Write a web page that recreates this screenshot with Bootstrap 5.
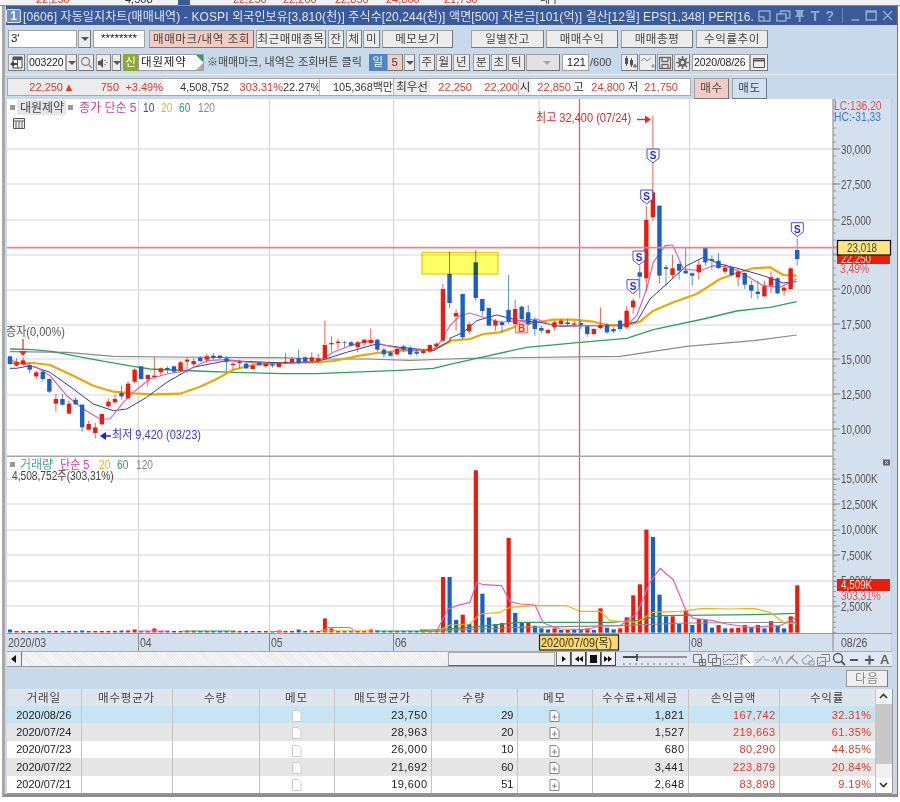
<!DOCTYPE html>
<html lang="ko">
<head>
<meta charset="UTF-8">
<title>자동일지차트</title>
<link rel="stylesheet" href="https://cdn.jsdelivr.net/npm/bootstrap@5.3.0/dist/css/bootstrap.min.css">
<style>
body { margin: 0; background: #fff; overflow: hidden; width: 900px; height: 802px; font: 11.5px "Liberation Sans", "Noto Sans CJK KR", sans-serif; color: #333; }
svg text { font-family: "Liberation Sans", "Noto Sans CJK KR", sans-serif; }
.top-cut { display: block; height: 6px; }
.hts-win { margin-left: 2px; width: 896px; height: 791px; background: #c9d9ec; border-left: 3px solid #a8a8a8; border-bottom: 3px solid #8f8f8f; border-right: 1px solid #777; }
.title-row { height: 19px; background: #3a5a99; color: #dfe6f5; font-size: 12px; letter-spacing: .12px; margin-left: 1px; flex: none; }
.title-num { width: 15px; height: 14px; border: 1px solid #dfe6f5; border-radius: 2px; background: #6f8fc8; text-align: center; line-height: 12px; font-weight: 700; color: #fff; margin-right: 2px; letter-spacing: 0; flex: none; }
.title-txt { width: 732px; white-space: nowrap; overflow: hidden; flex: none; }
.tools { height: 50px; padding: 5px 0 0 3px; border-bottom: 1px solid #e8eef6; flex: none; }
.tool-line { height: 18px; }
.tool-line + .tool-line { margin-top: 6px; height: 17px; }
.tbtn { height: 100%; padding: 0; background: #ececec; border: 1px solid #a0a0a0; border-right-color: #777; border-bottom-color: #777; border-radius: 0; font-size: 11.5px; line-height: 15px; color: #444; white-space: nowrap; letter-spacing: .6px; flex: none; }
.tbtn.hot { background: #f4cbc2; }
.tbtn.cool { background: #cfe0f2; }
.tbtn.on { background: #4d86c8; color: #fff; border-color: #4d86c8; }
.tbtn.dim { background: #e2e2e2; }
.fld { height: 100%; min-height: 0; padding: 0 2px; border: 1px solid #a0a0a0; border-radius: 0; background: #fff; font-size: 11.5px; line-height: 15px; color: #222; flex: none; white-space: nowrap; overflow: hidden; }
.fld.tight { padding: 0 1px; font-size: 10.5px; letter-spacing: -.1px; }
.fld.corner { letter-spacing: .8px; }
.note { font-size: 11px; line-height: 17px; color: #444; white-space: nowrap; flex: none; }
.sin { height: 100%; background: #8fa832; color: #fff; text-align: center; line-height: 16px; flex: none; }
.tri { display: block; width: 0; height: 0; margin: 0 auto; border-left: 4px solid transparent; border-right: 4px solid transparent; border-top: 4px solid #555; }
.tri.off { border-top-color: #aaa; }
.corner { position: relative; }
.corner::before { content: ""; position: absolute; top: 0; right: 0; border-top: 7px solid #2f9e55; border-left: 7px solid transparent; }
.corner::after { content: ""; position: absolute; bottom: 0; right: 0; border-bottom: 7px solid #aaa; border-left: 7px solid transparent; }
.quote-line { height: 24px; padding: 3px 0 0 2px; flex: none; }
.quote-box { height: 18px; width: 684px; border: 1px solid #a8a8a8; background: #fff; flex: none; }
.qc { height: 100%; line-height: 16px; font-size: 11px; text-align: right; white-space: nowrap; flex: none; color: #333; }
.qc.up { color: #e8352a; }
.qc.grey { background: #ececec; }
.qc.lab { text-align: center; font-size: 11.5px; }
.qc.bar { border-left: 1px solid #bbb; }
.chart-svg { display: block; margin-left: 2px; width: 885px; height: 552px; flex: none; }
.scroller { height: 16px; margin-left: 2px; width: 885px; background: #dfe7f2; border-top: 1px solid #aaa; border-bottom: 1px solid #999; flex: none; }
.hatch { width: 426px; background: repeating-linear-gradient(45deg, #f6f6f6 0 1px, #ebebeb 1px 2px); }
.thumb { width: 107px; background: #efefef; border: 1px solid #aaa; border-bottom-color: #666; }
.mbtn { width: 15px; height: 100%; background: #f2f2f2; border-left: 1px solid #777; border-right: 1px solid #444; border-bottom: 1px solid #444; flex: none; }
.arrowbtn { width: 15px; background: #efefef; border-right: 1px solid #777; }
.next-row { height: 22px; margin-left: 2px; width: 885px; padding: 3px 4px 2px 0; flex: none; }
.next-btn { width: 42px; height: 17px; font-size: 12px; line-height: 14px; color: #888; background: #eee; border: 1px solid #999; border-right-color: #777; padding: 0; border-radius: 0; letter-spacing: 1px; }
.grid-wrap { margin-left: 2px; width: 885px; height: 105px; border-bottom: 1px solid #999; flex: none; }
.trade-grid { margin: 0; width: 868px; table-layout: fixed; font-size: 11px; --bs-table-border-color: #c4c4c4; flex: none; }
.trade-grid th, .trade-grid td { height: 17.3px; padding: 0 3px; line-height: 14px; font-weight: 400; white-space: nowrap; vertical-align: middle; border-width: 0 1px 0 0; color: #222; }
.trade-grid th { background: #dde5ef; color: #444; text-align: center; font-size: 11.5px; letter-spacing: .8px; height: 17px; }
.trade-grid td.gain { color: #e8352a; letter-spacing: .4px; }
.trade-grid td.sp { letter-spacing: .45px; }
.trade-grid tr.pick td { background: #c6e5f0; }
.trade-grid tr.alt td { background: #e5e5e5; }
.trade-grid tr.plain td { background: #fff; }
.grid-scroll { width: 17px; background: #f0f0f0; border-right: 1px solid #999; flex: none; }
.sc-arrow { height: 15px; background: #eef1f5; color: #444; text-align: center; }
.sc-thumb { height: 61px; background: #c8c8c8; }
.sc-rest { height: 14px; }
.sc-down { height: 15px; background: #fff; text-align: center; }
.wd9 { width: 9px; } .wd11 { width: 11px; } .wd13 { width: 13px; } .wd15 { width: 15px; } .wd16 { width: 16px; } .wd17 { width: 17px; } .wd18 { width: 18px; }
.wd22 { width: 22px; } .wd27 { width: 27px; } .wd34 { width: 34px; } .wd35 { width: 35px; } .wd39 { width: 39px; } .wd52 { width: 52px; } .wd58 { width: 58px; } .wd66 { width: 66px; } .wd69 { width: 69px; } .wd70 { width: 70px; } .wd71 { width: 71px; } .wd72 { width: 72px; } .wd73 { width: 73px; } .wd105 { width: 105px; } .wd153 { width: 153px; }
.sp1 { margin-left: 1px; } .sp2 { margin-left: 2px; } .sp3 { margin-left: 3px; } .sp4 { margin-left: 4px; } .sp9 { margin-left: 9px; } .sp18 { margin-left: 18px; }
.cut-a { width: 55px; } .cut-b { width: 12px; } .cut-c { width: 44px; } .cut-d { width: 44px; } .cut-e { width: 66px; } .cut-f { width: 54px; } .cut-g { width: 36px; } .cut-h { width: 74px; } .cut-i { width: 37px; } .cut-j { width: 42px; } .cut-k { width: 46px; } .cut-l { width: 13px; } .cut-m { width: 40px; } .cut-n { width: 15px; } .cut-o { width: 39px; } .cut-p { width: 16px; } .cut-q { width: 37px; }
.mark-blend { mix-blend-mode: multiply; }
.c74 { width: 74px; } .c91 { width: 91px; } .c87 { width: 87px; } .c75 { width: 75px; } .c97 { width: 97px; } .c86 { width: 86px; } .c96 { width: 96px; }
</style>
</head>
<body>

<!-- sliver of the window behind -->
<svg class="top-cut" viewBox="0 0 900 6" width="900" height="6">
    <rect width="900" height="6" fill="#f2f2f2"/>
    <g font-size="11" fill="#e8352a">
        <text x="36" y="3">22,250</text><text x="233" y="3">22,250</text><text x="283" y="3">22,200</text><text x="335" y="3">22,850</text><text x="386" y="3">24,800</text><text x="444" y="3">21,750</text>
    </g>
    <g font-size="11" fill="#333"><text x="125" y="3">4,508</text><text x="540" y="3">매수</text></g>
    <rect x="178" y="0" width="12" height="5" fill="#3a5a99"/>
    <rect x="0" y="5" width="900" height="1" fill="#888"/>
</svg>

<div class="hts-win d-flex flex-column">

    <!-- title bar -->
    <div class="title-row d-flex align-items-center">
        <div class="title-num">1</div>
        <div class="title-txt">[0606] 자동일지차트(매매내역) - KOSPI 외국인보유[3,810(천)] 주식수[20,244(천)] 액면[500] 자본금[101(억)] 결산[12월] EPS[1,348] PER[16.</div>
        <svg viewBox="755 6 143 19" width="143" height="19" fill="none" stroke="#93a8d0" stroke-width="1.5">
            <path d="M759 11h11v10h-11zM759 17h5v4"/>
            <path d="M777 14h9v7h-9zM781 14v-3h9v7h-4"/>
            <path d="M795 10h10l-2 2v3l2 2h-4v5h-2v-5h-4l2-2v-3z" fill="#93a8d0" stroke="none"/>
            <text x="811" y="21" font-family="Liberation Serif" font-size="15" font-weight="700" fill="#93a8d0" stroke="none">T</text>
            <text x="826" y="21" font-size="14" font-weight="700" fill="#93a8d0" stroke="none">?</text>
            <path d="M843 8v15" stroke="#6f86b5" stroke-width="1"/>
            <path d="M852 20h8M867 11h10v9h-10zM867 12h10M884 11l9 9M893 11l-9 9"/>
        </svg>
    </div>

    <!-- toolbar, two rows -->
    <div class="tools">
        <div class="tool-line d-flex">
            <div class="form-control fld wd69">3'</div>
            <button class="btn tbtn wd13 sp1"><span class="tri"></span></button>
            <div class="form-control fld wd52 sp2 text-center">********</div>
            <button class="btn tbtn hot wd105 sp4">매매마크/내역 조회</button>
            <button class="btn tbtn wd70 sp2">최근매매종목</button>
            <button class="btn tbtn wd16 sp2">잔</button>
            <button class="btn tbtn wd16 sp2">체</button>
            <button class="btn tbtn wd17 sp1">미</button>
            <button class="btn tbtn wd71 sp2">메모보기</button>
            <button class="btn tbtn wd73 sp18">일별잔고</button>
            <button class="btn tbtn wd72 sp2">매매수익</button>
            <button class="btn tbtn wd72 sp3">매매총평</button>
            <button class="btn tbtn wd72 sp3">수익률추이</button>
        </div>
        <div class="tool-line d-flex">
            <button class="btn tbtn wd17"><svg width="15" height="15" viewBox="0 0 15 15"><path d="M4 2h9v11H4z" fill="#fff" stroke="#444"/><path d="M4 2h9v3H4zM8 5h1v8H8z" fill="#555"/><path d="M1 9l4-3v2h3v2H5v2z" fill="#444"/></svg></button>
            <div class="form-control fld tight wd39 sp2">003220</div>
            <button class="btn tbtn wd11"><span class="tri"></span></button>
            <button class="btn tbtn wd16 sp1"><svg width="13" height="13" viewBox="0 0 13 13" fill="none" stroke="#888" stroke-width="1.4"><circle cx="5.5" cy="5.5" r="4"/><path d="M8.5 8.5l3.5 3.5"/></svg></button>
            <button class="btn tbtn wd15 sp2"><svg width="13" height="13" viewBox="0 0 13 13"><path d="M1 5h2l3-3v10l-3-3H1z" fill="#555"/><path d="M8 4v1M8 8v1M10 6v1" stroke="#555"/></svg></button>
            <button class="btn tbtn wd9 sp1"><span class="tri"></span></button>
            <div class="sin wd15 sp2">신</div>
            <div class="form-control fld wd66 corner">대원제약</div>
            <div class="note wd153 sp3">※매매마크, 내역은 조회버튼 클릭</div>
            <button class="btn tbtn on wd18 sp9">일</button>
            <button class="btn tbtn hot wd16">5</button>
            <button class="btn tbtn wd11 sp1"><span class="tri"></span></button>
            <button class="btn tbtn wd16 sp4">주</button>
            <button class="btn tbtn wd16 sp1">월</button>
            <button class="btn tbtn wd17 sp1">년</button>
            <button class="btn tbtn wd17 sp3">분</button>
            <button class="btn tbtn wd16 sp1">초</button>
            <button class="btn tbtn wd17 sp1">틱</button>
            <button class="btn tbtn dim wd34 sp1 text-end pe-1"><span class="tri off ms-auto me-1"></span></button>
            <div class="form-control fld wd27 sp2 text-end">121</div>
            <div class="note wd22 sp1">/600</div>
            <button class="btn tbtn wd17 sp9"><svg width="15" height="15" viewBox="0 0 15 15"><path d="M3 3h3v6H3zM8 5h3v5H8z" fill="#555"/><path d="M4.5 1v10M9.5 3v9M11 11h4M13 9v4" stroke="#555"/></svg></button>
            <button class="btn tbtn wd17 sp1"><svg width="15" height="15" viewBox="0 0 15 15" fill="none" stroke="#888"><path d="M1 6l3-3 3 3 4-3M11 11h4M13 9v4"/></svg></button>
            <button class="btn tbtn wd16 sp1"><svg width="14" height="14" viewBox="0 0 14 14" fill="none" stroke="#666" stroke-width="1.3"><path d="M1.5 1.5h11v11h-11zM4 1.5v4h6v-4M4 12.5v-4h6v4"/></svg></button>
            <button class="btn tbtn wd16 sp1"><svg width="13" height="13" viewBox="0 0 13 13" fill="none" stroke="#666"><circle cx="6.5" cy="6.5" r="3" stroke-width="2.4"/><path d="M6.5 0v2.5M6.5 10.5V13M0 6.5h2.5M10.5 6.5H13M2 2l1.8 1.8M9.2 9.2 11 11M11 2 9.2 3.8M3.8 9.2 2 11" stroke-width="1.6"/></svg></button>
            <div class="form-control fld tight wd58 sp2">2020/08/26</div>
            <button class="btn tbtn wd18"><svg width="14" height="12" viewBox="0 0 14 12" fill="none" stroke="#555"><path d="M1.5 1.5h11v9h-11z"/><path d="M1.5 3.5h11" stroke-width="2"/></svg></button>
        </div>
    </div>

    <!-- quote strip -->
    <div class="quote-line d-flex">
        <div class="quote-box d-flex">
            <div class="qc up grey cut-a">22,250</div>
            <div class="qc up grey cut-b text-center">▲</div>
            <div class="qc up grey cut-c">750</div>
            <div class="qc up grey cut-d">+3.49%</div>
            <div class="qc cut-e">4,508,752</div>
            <div class="qc up cut-f">303.31%</div>
            <div class="qc cut-g">22.27%</div>
            <div class="qc bar cut-h">105,368백만</div>
            <div class="qc lab grey bar cut-i">최우선</div>
            <div class="qc up cut-j">22,250</div>
            <div class="qc up cut-k">22,200</div>
            <div class="qc lab grey bar cut-l">시</div>
            <div class="qc up cut-m">22,850</div>
            <div class="qc lab cut-n">고</div>
            <div class="qc up cut-o">24,800</div>
            <div class="qc lab cut-p">저</div>
            <div class="qc up cut-q">21,750</div>
        </div>
        <button class="btn tbtn hot wd35 sp3">매수</button>
        <button class="btn tbtn cool wd35 sp3">매도</button>
    </div>

    <!-- price and volume chart -->
    <svg class="chart-svg" id="chart" viewBox="7 100 885 552"></svg>

    <!-- scroller -->
    <div class="scroller d-flex">
        <div class="arrowbtn text-center"><svg width="8" height="14" viewBox="0 0 8 14"><path d="M6 3v8L1 7z" fill="#111"/></svg></div>
        <div class="hatch"></div>
        <div class="thumb"></div>
        <div class="mbtn sp1"><svg width="13" height="14" viewBox="0 0 13 14"><path d="M5 4v6l4-3z" fill="#111"/></svg></div>
        <div class="mbtn"><svg width="13" height="14" viewBox="0 0 13 14"><path d="M7 4v6L3 7zM11 4v6L7 7z" fill="#111"/></svg></div>
        <div class="mbtn"><svg width="13" height="14" viewBox="0 0 13 14"><path d="M3 3h7v8H3z" fill="#111"/></svg></div>
        <div class="mbtn"><svg width="13" height="14" viewBox="0 0 13 14"><path d="M2 4v6l4-3zM6 4v6l4-3z" fill="#111"/></svg></div>
        <svg viewBox="616 652 276 14" width="276" height="14">
            <rect x="739" y="652" width="14" height="14" fill="#fff"/>
            <g stroke="#777" fill="none">
                <path d="M623 657h64" stroke-width="1.5"/><path d="M637 654v7" stroke="#333" stroke-width="1.5"/><path d="M623 657h13" stroke="#333" stroke-width="1.5"/>
                <path d="M624 663v2M630 663v2M636 663v2M642 663v2M648 663v2M654 663v2M660 663v2M666 663v2M672 663v2M678 663v2M684 663v2"/>
                <path d="M693.5 654.5h8v8h-8zM699.5 659.5h6v6h-6zM702.5 659.5v6M699.5 662.5h6"/>
                <path d="M708.5 654.5h8v8h-8zM712.5 658.5h8v7h-8z"/>
                <path d="M723.5 654.5h14v10h-14z" stroke-dasharray="2 1"/><path d="M725 662l4-3 3 2 4-4"/>
                <path d="M741 654v11M742 655l8 8M742 655h5M742 655v5" stroke="#667"/>
                <path d="M755 660h5l3-4 2 4h4M756 663l6-4" stroke="#aaa"/>
                <path d="M772 662l3-5 2 7 3-8 3 8" stroke="#999"/>
                <path d="M786 664l5-7 7 7M789 660l5-5" stroke="#999" stroke-width="1.3"/>
                <path d="M802 660l6-5 5 4-4 5h-5zM809 661h5v4h-5z" stroke="#999"/>
                <path d="M817.5 657.5h8v8h-8zM821.5 654.5h8v7h-3" stroke="#888"/><path d="M819 664l3-3 3 1" stroke="#888"/>
                <circle cx="838" cy="658" r="4.5" stroke="#555" stroke-width="1.3"/><path d="M841 661l4 4" stroke="#555" stroke-width="1.8"/>
                <path d="M850 660h8M865 660h9M869.5 655.5v9" stroke="#555" stroke-width="2"/>
            </g>
            <text x="880" y="664" font-size="13" font-weight="700" fill="#666">A</text>
        </svg>
    </div>

    <div class="next-row d-flex justify-content-end">
        <button class="btn next-btn">다음</button>
    </div>

    <!-- trade list -->
    <div class="grid-wrap d-flex">
        <table class="table trade-grid">
            <colgroup><col class="c74"><col class="c91"><col class="c87"><col class="c75"><col class="c97"><col class="c86"><col class="c75"><col class="c96"><col class="c91"><col class="c96"></colgroup>
            <thead>
                <tr><th>거래일</th><th>매수평균가</th><th>수량</th><th>메모</th><th>매도평균가</th><th>수량</th><th>메모</th><th>수수료+제세금</th><th>손익금액</th><th>수익률</th></tr>
            </thead>
            <tbody id="tradeRows"></tbody>
        </table>
        <div class="grid-scroll d-flex flex-column">
            <div class="sc-arrow"><svg width="11" height="12" viewBox="0 0 11 12" fill="none" stroke="#333" stroke-width="1.6"><path d="M2 8l3.5-3.500L9 8"/></svg></div>
            <div class="sc-thumb"></div>
            <div class="sc-rest"></div>
            <div class="sc-down"><svg width="11" height="12" viewBox="0 0 11 12" fill="none" stroke="#333" stroke-width="1.6"><path d="M2 4l3.5 3.500L9 4"/></svg></div>
        </div>
    </div>
</div>

<script>
    const RED = "#ea1c0c", BLUE = "#1a5fc8";

    // candles: colour, body top, body bottom, wick top, wick bottom
    // first block read in zoom coords of the left half, second block of the right half
    const leftCandles = `b 352 375 350 378,r 370 380 358 382,r 364 376 355 380,b 378 392 372 402,r 400 412 395 420,b 398 420 395 428,b 420 458 418 462,r 480 494 465 518,b 480 497 465 500,r 494 524 485 524,b 482 496 475 498,b 497 565 495 578,r 555 572 545 574,r 565 582 552 598,r 525 556 525 558,r 488 502 480 504,r 480 490 468 494,b 462 472 440 482,r 434 478 426 480,r 392 428 388 434,b 382 420 382 422,r 408 420 405 442,r 410 414 355 415,r 388 400 385 410,b 387 392 382 402,b 382 398 380 402,r 370 394 366 398,r 362 368 356 402,r 366 376 358 378,b 356 366 352 370,r 352 362 345 372,b 350 357 342 362,b 350 357 348 360,b 358 368 352 398,r 374 378 370 392,r 368 372 362 388,b 374 388 366 390,r 380 390 374 392,b 370 378 368 382,r 374 382 372 385,b 376 380 370 386,r 372 384 370 386,r 368 372 342 376,r 360 370 354 372,b 358 372 332 376,b 355 368 352 372,r 355 366 340 370,r 358 366 345 372,r 318 358 245 362,r 312 316 292 340,r 308 312 300 330,b 310 312 306 325,b 310 320 306 322,r 310 324 306 340,r 302 312 300 322,r 303 312 268 318,b 302 332 300 338,b 332 346 325 356,b 340 350 336 354,r 330 346 325 350,b 322 332 318 340,b 326 346 320 350,b 338 344 332 350,r 335 342 330 346,r 318 338 316 342,r 314 322 310 326`;
    const rightCandles = `r 570 725 555 730,b 525 612 458 628,r 642 652 630 695,b 585 715 585 722,r 676 697 668 705,b 490 597 453 605,b 600 636 600 650,b 627 680 627 682,r 665 680 660 695,b 670 678 665 700,b 633 668 528 675,r 630 675 602 680,b 623 660 620 665,b 640 675 618 680,b 663 690 655 710,b 687 695 680 703,r 693 702 690 705,r 670 685 665 695,r 665 675 660 678,b 670 675 660 682,r 673 677 665 685,b 672 678 665 690,b 682 705 680 713,r 690 705 688 708,r 678 687 625 690,b 677 700 672 705,b 690 697 685 702,b 665 690 662 695,r 635 685 622 690,r 605 625 598 645,b 520 533 500 598,r 363 538 320 575,r 280 355 50 365,b 320 530 320 552,b 505 510 498 562,r 508 528 468 540,b 495 515 490 542,b 515 523 447 525,b 523 530 520 560,r 497 520 482 542,b 447 490 445 500,b 480 485 470 512,b 485 507 462 510,r 507 518 495 525,b 505 528 503 532,r 518 535 510 562,b 522 557 520 570,b 558 575 545 598,b 578 585 545 600,r 562 592 545 595,r 535 560 517 582,b 538 583 535 585,r 566 575 560 590,r 508 570 505 572,b 453 480 420 500`;

    const candles = [
        ...leftCandles.split(",").map(s => parseCandle(s, 240)),
        ...rightCandles.split(",").map(s => parseCandle(s, 100))
    ];

    function parseCandle(s, top) {
        let p = s.split(" ");
        return { c: p[0] === "r" ? RED : BLUE, y: [1, 2, 3, 4].map(n => top + p[n] / 3) };
    }

    const candleX = i => 10 + 6.56 * i;

    // volume bars: tops in zoom coords for the right part, small heights on the left
    const volSmall = { 0: 3, 11: 2, 17: 2, 18: 2, 19: 3, 22: 4, 41: 2, 44: 3, 46: 2, 48: 14, 49: 4, 55: 3, 56: 2 };
    const volRight = `r 384,b 384,b 513,r 497,b 525,r 64,b 434,b 505,b 525,r 522,r 267,b 492,b 520,r 522,b 530,b 538,b 541,r 538,b 543,r 543,b 543,b 543,r 538,b 543,r 478,b 536,b 541,r 538,r 505,r 439,r 406,r 242,b 264,b 437,b 502,r 502,b 525,r 485,b 528,r 510,b 512,b 536,r 528,b 538,r 538,r 536,r 528,b 534,r 528,b 538,r 516,b 531,b 538,r 502,r 409`.split(",");

    // moving averages, zoom coords: [left-half points, right-half points]
    const lines = [
        { col: "#8a8a8a", w: 1.2, a: [30,338,200,340,340,352,500,354,830,356,980,360,1100,360,1230,364,1350,360], b: [140,778,600,772,800,742,1000,725,1130,708] },
        { col: "#2aa35a", w: 1.3, a: [30,330,100,332,160,338,220,350,300,365,400,382,450,390,590,396,700,400,850,404,950,404,1100,398,1200,394,1300,388,1350,376], b: [170,778,320,745,480,730,620,718,700,692,850,660,950,636,1050,625,1130,608] },
        { col: "#f0a800", w: 2.2, a: [30,372,100,372,150,378,220,410,280,440,340,458,400,463,460,466,540,464,600,443,650,420,700,392,760,378,850,372,940,370,1000,366,1080,350,1130,342,1200,335,1300,332,1350,308], b: [90,725,150,720,190,705,240,700,290,682,340,672,400,662,460,662,520,668,560,678,620,678,660,668,700,635,760,610,830,585,900,540,950,522,1000,508,1050,505,1090,528,1130,530] },
        { col: "#2b3fa8", w: 1, a: [30,388,50,388,90,380,150,400,220,450,280,495,340,515,380,510,440,475,500,430,580,385,680,365,760,368,850,372,950,368,1040,340,1130,315,1200,325,1300,335,1350,305], b: [90,718,130,700,170,665,230,648,300,665,360,670,420,682,500,680,600,680,650,668,690,600,740,555,800,500,850,475,900,495,960,510,1030,530,1090,552,1130,548] },
        { col: "#e35cc4", w: 1.2, a: [30,362,60,372,110,385,150,410,200,470,250,510,300,540,330,540,370,490,400,460,450,420,500,405,560,395,620,365,680,362,750,370,840,375,960,365,1000,340,1050,320,1110,305,1160,320,1230,335,1300,330,1320,310,1350,260], b: [90,680,120,650,150,642,190,655,240,670,300,665,350,660,400,680,460,680,540,680,620,680,650,650,680,570,700,490,735,440,758,438,790,510,840,515,880,500,930,505,980,530,1030,560,1080,565,1130,540] }
    ];
    const volLines = [
        { col: "#8a8a8a", w: 1.2, p: [0,548,300,535,600,530,800,522,1130,520] },
        { col: "#2aa35a", w: 1.3, p: [0,545,150,535,300,520,570,520,650,515,720,500,1000,497,1130,493] },
        { col: "#f5b400", w: 1.2, p: [0,541,60,543,90,528,150,525,180,495,240,490,270,475,340,470,440,470,480,487,540,487,570,515,650,520,700,490,780,487,850,478,930,480,1000,478,1050,490,1090,520,1130,525] },
        { col: "#e35cc4", w: 1.2, p: [50,545,85,480,110,470,150,460,170,400,190,407,245,410,270,458,300,465,345,468,370,522,420,540,500,542,540,530,600,530,650,495,690,400,720,358,760,392,800,490,820,508,880,515,920,525,990,535,1080,530,1130,505] }
    ];

    function poly(col, w, pts) {
        return `<polyline fill="none" stroke="${col}" stroke-width="${w}" stroke-linejoin="round" points="${pts.join(" ")}"/>`;
    }

    function pairs(arr, fn) {
        let out = [];
        for (let i = 0; i < arr.length; i += 2) out.push(fn(arr[i], arr[i + 1]).map(v => v.toFixed(1)).join(","));
        return out;
    }

    // narrowed label, the source terminal font is tall and thin
    function label(x, y, text, fill, size = 12, sx = 0.85) {
        return `<text transform="translate(${x} ${y}) scale(${sx} 1)" font-size="${size}" fill="${fill}">${text}</text>`;
    }

    function shield(x, y, letter) {
        return `<path d="M${x - 6} ${y - 7}h12v9l-6 5l-6-5z" fill="#fff" stroke="#4a4af0"/><text x="${x}" y="${y + 3}" text-anchor="middle" font-size="10" font-weight="700" fill="#2a2ae0">${letter}</text>`;
    }

    function drawChart() {
        let g = "";
        // canvas and right scale panel
        g += `<rect x="7" y="100" width="885" height="552" fill="#fff"/>`;
        g += `<rect x="833" y="100" width="59" height="552" fill="#d5e0ef"/>`;
        g += `<rect x="7" y="634" width="885" height="18" fill="#d5e0ef"/>`;

        // grid
        [150, 185, 221, 256, 291, 326, 360, 396, 431].forEach(y => g += `<path d="M7 ${y}H833" stroke="#e3e3e3" stroke-width="1.5"/>`);
        [480, 505, 531, 556, 582, 607].forEach(y => g += `<path d="M7 ${y}H833" stroke="#e3e3e3" stroke-width="1.5"/>`);
        [138.5, 269.5, 393.5, 539, 689.5].forEach(x => g += `<path d="M${x} 100V634" stroke="#d6d6d6" stroke-width="1.2"/>`);

        // volume bars
        for (let i = 0; i < 66; i++) {
            let h = volSmall[i] || 1.5;
            g += `<rect x="${candleX(i) - 2}" y="${633.5 - h}" width="4" height="${h}" fill="${candles[i].c}"/>`;
        }
        volRight.forEach((s, n) => {
            let p = s.split(" "), top = 450 + p[1] / 3;
            g += `<rect x="${candleX(66 + n) - 2}" y="${top}" width="4.2" height="${633.7 - top}" fill="${p[0] === "r" ? RED : BLUE}"/>`;
        });
        g += poly("#e35cc4", 1, [138, 632, 170, 632]) + poly("#2aa35a", 1, [183, 632, 236, 632]) + poly("#e35cc4", 1, [270, 632.5, 282, 632.5]);
        g += poly("#e35cc4", 1, [321, 632.5, 328, 628.5, 350, 628.5, 356, 632.5]);
        g += poly("#f5b400", 1, [320, 631.8, 372, 631.8]) + poly("#2aa35a", 1, [375, 632, 440, 632]);
        volLines.forEach(l => g += poly(l.col, l.w, pairs(l.p, (x, y) => [420 + x / 3, 450 + y / 3])));

        // price lines under the candles
        lines.forEach(l => {
            let pts = pairs(l.a, (x, y) => [x / 3, 240 + y / 3]).concat(pairs(l.b, (x, y) => [420 + x / 3, 100 + y / 3]));
            g += poly(l.col, l.w, pts);
        });

        // candles
        candles.forEach((k, i) => {
            let x = candleX(i);
            g += `<path d="M${x} ${k.y[2]}V${k.y[3]}" stroke="${k.c}" stroke-opacity=".7"/>`;
            g += `<rect x="${x - 2.2}" y="${k.y[0]}" width="4.4" height="${k.y[1] - k.y[0]}" fill="${k.c}"/>`;
        });

        // yellow highlight, candles show through it
        g += `<rect class="mark-blend" x="422" y="253.5" width="76" height="21.5" fill="#ffff66" stroke="#f2c800" stroke-width="1.2"/>`;

        // buy / sell marks
        [[653, 157], [646.7, 198], [639, 259], [633, 287.7], [797.3, 230.7]].forEach(m => g += shield(m[0], m[1], "S"));
        g += `<path d="M521.7 322l6 4v8h-12v-8z" fill="#ffe4e0" stroke="#f06055"/><text x="521.7" y="333" text-anchor="middle" font-size="10" font-weight="700" fill="#e8352a">B</text>`;

        // crosshair
        g += `<path d="M579.5 100V634" stroke="#f05565" stroke-width="1.3"/><path d="M7 248.7H837" stroke="#f88080" stroke-width="1.8"/>`;
        g += `<path d="M7 457.3H833" stroke="#a8a8a8" stroke-width="1.4"/>`;

        // annotations
        g += label(536, 123, "최고 32,400 (07/24)", "#e8252a", 12, .92);
        g += `<path d="M637 120.5h9" stroke="#e8252a" stroke-width="1.4"/><path d="M645 116.5l6 4-6 4z" fill="#e8252a"/>`;
        g += `<path d="M100 437l6-4v8z" fill="#1a1ae8"/><path d="M105 437h6" stroke="#1a1ae8" stroke-width="1.4"/>`;
        g += label(112, 440, "최저 9,420 (03/23)", "#3a3aee", 12, .92);
        g += label(6, 337, "증자(0,00%)", "#555", 12, .92);
        g += `<path d="M23 340v11" stroke="#e8252a" stroke-width="1.2"/><path d="M19 352h8l-4 5z" fill="#e8252a"/>`;

        // legend, price pane
        g += `<rect x="17" y="101" width="49" height="15" fill="#e6e6e6"/><rect x="10" y="106" width="5" height="5" fill="#999"/><rect x="68" y="106" width="5" height="5" fill="#999"/>`;
        g += label(20, 112.5, "대원제약", "#444", 12, 1);
        g += label(79, 112.5, "종가 단순 5", "#e033b8", 12, 1);
        g += label(143, 112.5, "10", "#2b4fc0", 12);
        g += label(161, 112.5, "20", "#f0b020", 12);
        g += label(179, 112.5, "60", "#2aa35a", 12);
        g += label(198, 112.5, "120", "#888", 12);
        g += `<path d="M13.5 119.5h11v10h-11z" fill="#eee" stroke="#555"/><path d="M13.5 122h11M16 122v7M19 122v7M22 122v7" stroke="#666"/>`;

        // legend, volume pane
        g += `<rect x="10" y="463" width="5" height="5" fill="#999"/>`;
        g += label(20, 469.5, "거래량", "#45a5a5", 12, 1);
        g += label(60, 469.5, "단순 5", "#e033b8", 12, .92);
        g += label(99, 469.5, "20", "#f0b020", 12);
        g += label(117, 469.5, "60", "#2aa35a", 12);
        g += label(136, 469.5, "120", "#888", 12);
        g += label(12, 481, "4,508,752주(303,31%)", "#444", 12, .85);

        // scale ticks
        g += `<path d="M833 100V634" stroke="#a8a8a8" stroke-width="1.5"/><path d="M892 100V652" stroke="#bbb"/>`;
        for (let y = 101; y < 457; y += 7) g += `<path d="M833 ${y}h3" stroke="#999"/>`;
        for (let y = 460; y < 634; y += 5.1) g += `<path d="M833 ${y}h3" stroke="#999"/>`;
        [150, 185, 221, 256, 290, 325, 360, 395, 430, 480, 505, 531, 556, 582, 607].forEach(y => g += `<path d="M833 ${y}h7" stroke="#888"/>`);

        [["30,000", 150], ["27,500", 185], ["25,000", 221], ["20,000", 290], ["17,500", 325], ["15,000", 360], ["12,500", 395], ["10,000", 430]]
            .forEach(v => g += label(841, v[1] + 4.5, v[0], "#555", 12, .82));
        [["15,000K", 479], ["12,500K", 505], ["10,000K", 530], ["7,500K", 556], ["5,000K", 581], ["2,500K", 607]]
            .forEach(v => g += label(841, v[1] + 4.5, v[0], "#555", 12, .82));

        g += label(834, 110.5, "LC:136,20", "#e85050", 12, .86);
        g += label(834, 122, "HC:-31,33", "#3a7ad8", 12, .86);

        // last price tags
        g += `<rect x="837" y="256" width="53" height="9" fill="#ea1c0c"/>`;
        g += label(841, 264, "22,250", "#ffd8d0", 12, .82);
        g += `<rect x="837.5" y="241.5" width="53" height="14.5" fill="#ffe680" stroke="#111" stroke-width="1.2"/>`;
        g += label(847, 252.5, "23,018", "#444", 12, .82);
        g += label(840, 274, "3,49%", "#e85050", 12, .86);
        g += `<rect x="837" y="580" width="53" height="12" fill="#ea1c0c"/>`;
        g += label(841, 590, "4,509K", "#ffe6e0", 12, .82);
        g += label(841, 601, "303,31%", "#f05050", 12, .84);

        // pane close box
        g += `<rect x="883" y="460.5" width="7" height="6" fill="#666"/><path d="M885 462l3 3M888 462l-3 3" stroke="#ddd" stroke-width=".8"/>`;

        // date axis
        g += `<path d="M7 634.5H892" stroke="#999"/>`;
        [138.5, 269.5, 393.5, 689.5, 833].forEach(x => g += `<path d="M${x} 634V652" stroke="#888"/>`);
        [["2020/03", 8], ["04", 140], ["05", 271], ["06", 395], ["08", 691], ["08/26", 841]]
            .forEach(v => g += label(v[1], 647.5, v[0], "#555", 12, .88));
        g += `<rect x="539.5" y="636" width="79" height="15" fill="#ffd966" stroke="#222" stroke-width="1.2"/>`;
        g += label(541, 647.5, "2020/07/09(목)", "#333", 12, .9);

        document.getElementById("chart").innerHTML = g;
    }

    const memoIcon = `<svg width="11" height="12" viewBox="0 0 11 12"><path d="M1.5 .5h5.500l3 3v8h-8.500z" fill="#fff" stroke="#ccc"/></svg>`;
    const plusIcon = `<svg width="11" height="12" viewBox="0 0 11 12" fill="none" stroke="#888"><path d="M1 .5h6l3 3v8H1z" fill="#fff"/><path d="M3 7h5M5.5 4.500v5"/></svg>`;

    const trades = [
        ["pick", "2020/08/26", "23,750", "29", "1,821", "167,742", "32.31%"],
        ["alt", "2020/07/24", "28,963", "20", "1,527", "219,663", "61.35%"],
        ["plain", "2020/07/23", "26,000", "10", "680", "80,290", "44.85%"],
        ["alt", "2020/07/22", "21,692", "60", "3,441", "223,879", "20.84%"],
        ["plain", "2020/07/21", "19,600", "51", "2,648", "83,899", "9.19%"]
    ];

    function fillTrades() {
        let body = document.getElementById("tradeRows");
        body.innerHTML = "";
        trades.forEach(t => {
            body.innerHTML += `
                <tr class="${t[0]}">
                    <td class="text-center">${t[1]}</td><td></td><td></td>
                    <td class="text-center">${memoIcon}</td>
                    <td class="text-end sp">${t[2]}</td><td class="text-end">${t[3]}</td>
                    <td class="text-center">${plusIcon}</td>
                    <td class="text-end sp">${t[4]}</td>
                    <td class="text-end gain">${t[5]}</td><td class="text-end gain">${t[6]}</td>
                </tr>`;
        });
    }

    drawChart();
    fillTrades();
</script>
<script src="https://cdn.jsdelivr.net/npm/bootstrap@5.3.0/dist/js/bootstrap.bundle.min.js"></script>
</body>
</html>
